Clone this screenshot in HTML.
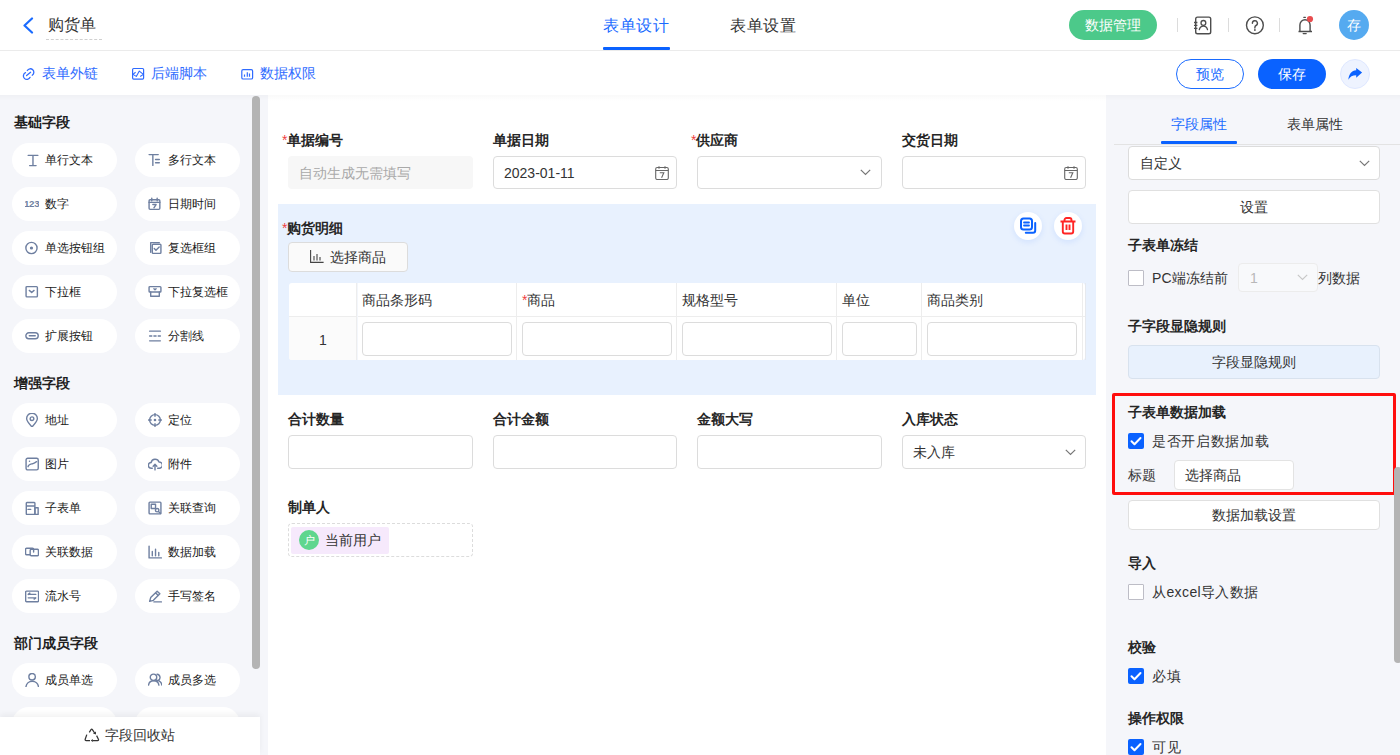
<!DOCTYPE html>
<html><head><meta charset="utf-8">
<style>
*{box-sizing:border-box;margin:0;padding:0}
html,body{width:1400px;height:755px;overflow:hidden;background:#fff;font-family:"Liberation Sans",sans-serif;color:#333}
.a{position:absolute;white-space:nowrap}
#hdr{position:absolute;left:0;top:0;width:1400px;height:51px;border-bottom:1px solid #ebebeb;background:#fff}
#sub{position:absolute;left:0;top:51px;width:1400px;height:44px;background:#fff}
#left{position:absolute;left:0;top:95px;width:268px;height:660px;background:#f5f6fa}
#canvas{position:absolute;left:268px;top:95px;width:838px;height:660px;background:#fff}
#right{position:absolute;left:1106px;top:95px;width:294px;height:660px;background:#f5f6fa}
.shadow{position:absolute;left:0;top:95px;width:1400px;height:6px;background:linear-gradient(rgba(0,0,0,0.025),rgba(0,0,0,0))}
.pill{position:absolute;width:105px;height:34px;border-radius:17px;background:#fff;font-size:12px;color:#1a1a1a;line-height:34px}
.pill svg{position:absolute;left:14px;top:11px;width:12px;height:12px}
.pill span{position:absolute;left:33px;top:0}
.h{position:absolute;font-size:14px;font-weight:bold;color:#1f1f1f;line-height:14px;margin-top:-1px}
.lbl{position:absolute;font-size:14px;font-weight:bold;color:#262626;line-height:14px;margin-top:-1px}
.req{color:#f03e3e;font-weight:normal}
.inp{position:absolute;border:1px solid #dcdcdc;border-radius:4px;background:#fff}
.btn{position:absolute;border:1px solid #e0e0e0;border-radius:4px;background:#fff;text-align:center;font-size:14px;color:#333}
.cb{position:absolute;width:16px;height:16px;border:1px solid #bdbdc6;border-radius:1px;background:#fff}
.cbc{position:absolute;width:16px;height:16px;border-radius:2px;background:#0a62ff}
.t14{font-size:14px;line-height:14px}
</style></head><body>

<!-- HEADER -->
<div id="hdr">
  <svg class="a" style="left:22px;top:17px" width="12" height="17" viewBox="0 0 12 17"><path d="M10 1.5 L2.5 8.5 L10 15.5" fill="none" stroke="#1a6bff" stroke-width="2.2" stroke-linecap="round" stroke-linejoin="round"/></svg>
  <div class="a" style="left:48px;top:16px;font-size:16px;line-height:18px;color:#333">购货单</div>
  <div class="a" style="left:46px;top:39px;width:56px;height:1px;border-top:1px dashed #d0d0d0"></div>
  <div class="a" style="left:603px;top:17px;font-size:16px;letter-spacing:0.6px;line-height:18px;color:#1a6bff">表单设计</div>
  <div class="a" style="left:603px;top:47px;width:67px;height:3px;background:#0a62ff;border-radius:1px"></div>
  <div class="a" style="left:730px;top:17px;font-size:16px;letter-spacing:0.6px;line-height:18px;color:#333">表单设置</div>
  <div class="a" style="left:1069px;top:10px;width:88px;height:30px;border-radius:15px;background:#4cc98a;color:#fff;font-size:14px;line-height:30px;text-align:center">数据管理</div>
  <div class="a" style="left:1177px;top:18px;width:1px;height:14px;background:#dcdcdc"></div>
  <div class="a" style="left:1228px;top:18px;width:1px;height:14px;background:#dcdcdc"></div>
  <div class="a" style="left:1279px;top:18px;width:1px;height:14px;background:#dcdcdc"></div>
  
  <svg class="a" style="left:1190px;top:12px" width="26" height="26" viewBox="0 0 26 26"><rect x="5.7" y="5.1" width="15" height="16.6" rx="1.8" fill="none" stroke="#4d4d4d" stroke-width="1.4"/><path d="M4 10.5h3.4M4 13.4h3.4M4 16.4h3.4" stroke="#4d4d4d" stroke-width="1.3"/><circle cx="13.4" cy="10.9" r="2.4" fill="none" stroke="#4d4d4d" stroke-width="1.3"/><path d="M9.3 17.7c0.5-2.3 2.1-3.6 4.1-3.6s3.6 1.3 4.1 3.6" fill="none" stroke="#4d4d4d" stroke-width="1.3" stroke-linecap="round"/></svg>
  <svg class="a" style="left:1242px;top:12px" width="26" height="26" viewBox="0 0 26 26"><circle cx="12.9" cy="13.3" r="8.4" fill="none" stroke="#4d4d4d" stroke-width="1.4"/><path d="M10.4 11.3a2.5 2.5 0 1 1 3.6 2.2c-0.8 0.4-1.1 0.9-1.1 1.7v0.8" fill="none" stroke="#4d4d4d" stroke-width="1.4" stroke-linecap="round"/><circle cx="12.9" cy="18" r="0.9" fill="#4d4d4d"/></svg>
  <svg class="a" style="left:1292px;top:12px" width="26" height="26" viewBox="0 0 26 26"><path d="M6.5 19.5h13.5M7.9 19.5v-6.6a5.1 5.1 0 0 1 10.2 0v6.6" fill="none" stroke="#4d4d4d" stroke-width="1.4"/><path d="M11.8 5.3h1.6M11.2 21.6h3" stroke="#4d4d4d" stroke-width="1.3" stroke-linecap="round"/><circle cx="18" cy="7" r="3.1" fill="#e84d4f"/></svg>
  <div class="a" style="left:1339px;top:10px;width:30px;height:30px;border-radius:15px;background:#55aaf0;color:#fff;font-size:14px;line-height:30px;text-align:center">存</div>
</div>

<!-- SUBHEADER -->
<div id="sub">
  <div class="a" style="left:42px;top:15px;font-size:14px;line-height:14px;color:#2f6bff">表单外链</div>
  <div class="a" style="left:151px;top:15px;font-size:14px;line-height:14px;color:#2f6bff">后端脚本</div>
  <div class="a" style="left:260px;top:15px;font-size:14px;line-height:14px;color:#2f6bff">数据权限</div>
  <div class="a" style="left:1176px;top:8px;width:68px;height:30px;border:1px solid #1a6bff;border-radius:15px;color:#1a6bff;font-size:14px;line-height:28px;text-align:center">预览</div>
  <div class="a" style="left:1258px;top:8px;width:68px;height:30px;border-radius:15px;background:#0a62ff;color:#fff;font-size:14px;line-height:30px;text-align:center">保存</div>
  <div class="a" style="left:1340px;top:8px;width:30px;height:30px;border-radius:15px;background:#eef3ff;border:1px solid #dfe8ff"></div>
</div>


  <svg class="a" style="left:18px;top:64px" width="20" height="20" viewBox="0 0 20 20"><path d="M9.3 6.5A3.5 3.5 0 1 1 14.2 11.2M7.5 8.7A3.5 3.5 0 1 0 12.1 13.3M8.6 11.6L12.6 8.3" fill="none" stroke="#2f6bff" stroke-width="1.3" stroke-linecap="round"/></svg>
  <svg class="a" style="left:128px;top:64px" width="20" height="20" viewBox="0 0 20 20"><rect x="4.6" y="4.5" width="11" height="10.6" rx="1" fill="none" stroke="#2f6bff" stroke-width="1.2"/><path d="M7.6 8.2L4.9 10.4l3.4 2L11.3 7.1l4.1 3.3-3.2 2.1" fill="none" stroke="#2f6bff" stroke-width="1.1" stroke-linejoin="round"/></svg>
  <svg class="a" style="left:237px;top:64px" width="20" height="20" viewBox="0 0 20 20"><rect x="4.8" y="5.6" width="10.8" height="9.4" rx="1.3" fill="none" stroke="#2f6bff" stroke-width="1.2"/><path d="M7.5 10.4v2.4M10.3 8.2v4.6M12.5 9.6v3.2" stroke="#2f6bff" stroke-width="1.2"/></svg>

<svg class="a" style="left:1340px;top:59px" width="30" height="30" viewBox="0 0 30 30"><path d="M16.2 9L22.1 13.6L16.2 18.7V16.2C12.5 16.2 10 17.5 8.4 20.7C8.8 15.5 11.5 11.6 16.2 11.3Z" fill="#0a62ff"/></svg>
<div id="left"></div>
<div class="h" style="left:14px;top:116px">基础字段</div>
<div class="pill" style="left:12px;top:143px"><svg viewBox="0 0 13 13" style="left:13px;top:9.6px;width:14px;height:14px"><path d="M2.9 2.2H12M7.4 2.2v9.5M4.3 11.7h6" stroke="#6e7fa0" stroke-width="1.3" fill="none" stroke-linecap="round" stroke-linejoin="round"/></svg><span>单行文本</span></div>
<div class="pill" style="left:135px;top:143px"><svg viewBox="0 0 13 13" style="left:13px;top:9.6px;width:14px;height:14px"><path d="M1 1.5h8.5M4.5 1.5v10M7 6h3.5M7 9h3.5" stroke="#6e7fa0" stroke-width="1.3" fill="none" stroke-linecap="round" stroke-linejoin="round"/></svg><span>多行文本</span></div>
<div class="pill" style="left:12px;top:187px"><svg viewBox="0 0 13 13" style="left:13px;top:9.6px;width:14px;height:14px"><text x="-1" y="9.6" font-family="Liberation Sans" font-weight="bold" font-size="9" letter-spacing="-0.2" fill="#6e7fa0">123</text></svg><span>数字</span></div>
<div class="pill" style="left:135px;top:187px"><svg viewBox="0 0 13 13" style="left:13px;top:9.6px;width:14px;height:14px"><rect x="1" y="2.5" width="10" height="9" rx="1" stroke="#6e7fa0" stroke-width="1.3" fill="none" stroke-linecap="round" stroke-linejoin="round"/><path d="M1 5h10M3.5 1v2.5M8.5 1v2.5M4.5 7h3l-2 3" stroke="#6e7fa0" stroke-width="1.3" fill="none" stroke-linecap="round" stroke-linejoin="round"/></svg><span>日期时间</span></div>
<div class="pill" style="left:12px;top:231px"><svg viewBox="0 0 13 13" style="left:13px;top:9.6px;width:14px;height:14px"><circle cx="6" cy="6.5" r="5.2" stroke="#6e7fa0" stroke-width="1.3" fill="none" stroke-linecap="round" stroke-linejoin="round"/><circle cx="6" cy="6.5" r="1.5" fill="#6e7fa0"/></svg><span>单选按钮组</span></div>
<div class="pill" style="left:135px;top:231px"><svg viewBox="0 0 13 13" style="left:13px;top:9.6px;width:14px;height:14px"><path d="M2.5 10.5v-9h8" stroke="#6e7fa0" stroke-width="1.3" fill="none" stroke-linecap="round" stroke-linejoin="round"/><rect x="4" y="3" width="8" height="8.5" rx="0.8" stroke="#6e7fa0" stroke-width="1.3" fill="none" stroke-linecap="round" stroke-linejoin="round"/><path d="M5.8 7l1.6 1.6 3-3" stroke="#6e7fa0" stroke-width="1.3" fill="none" stroke-linecap="round" stroke-linejoin="round"/></svg><span>复选框组</span></div>
<div class="pill" style="left:12px;top:275px"><svg viewBox="0 0 13 13" style="left:13px;top:9.6px;width:14px;height:14px"><rect x="1" y="1.5" width="10.5" height="9.5" rx="0.8" stroke="#6e7fa0" stroke-width="1.3" fill="none" stroke-linecap="round" stroke-linejoin="round"/><path d="M4 5l2.2 2 2.2-2" stroke="#6e7fa0" stroke-width="1.3" fill="none" stroke-linecap="round" stroke-linejoin="round"/></svg><span>下拉框</span></div>
<div class="pill" style="left:135px;top:275px"><svg viewBox="0 0 13 13" style="left:13px;top:9.6px;width:14px;height:14px"><rect x="1" y="1.5" width="11" height="5" rx="0.8" stroke="#6e7fa0" stroke-width="1.3" fill="none" stroke-linecap="round" stroke-linejoin="round"/><path d="M2.5 6.5v4h8v-4M5.5 3.5l1 1 1-1" stroke="#6e7fa0" stroke-width="1.3" fill="none" stroke-linecap="round" stroke-linejoin="round"/></svg><span>下拉复选框</span></div>
<div class="pill" style="left:12px;top:319px"><svg viewBox="0 0 13 13" style="left:13px;top:9.6px;width:14px;height:14px"><rect x="0.8" y="3.5" width="11.5" height="5.5" rx="2.75" stroke="#6e7fa0" stroke-width="1.3" fill="none" stroke-linecap="round" stroke-linejoin="round"/><path d="M4 6.25h5.5" stroke="#6e7fa0" stroke-width="1.3" fill="none" stroke-linecap="round" stroke-linejoin="round"/></svg><span>扩展按钮</span></div>
<div class="pill" style="left:135px;top:319px"><svg viewBox="0 0 13 13" style="left:13px;top:9.6px;width:14px;height:14px"><path d="M1.5 2h10M1.5 6.5h2M5.5 6.5h2M9.5 6.5h2M1.5 11h10" stroke="#6e7fa0" stroke-width="1.3" fill="none" stroke-linecap="round" stroke-linejoin="round"/></svg><span>分割线</span></div>
<div class="h" style="left:14px;top:377px">增强字段</div>
<div class="pill" style="left:12px;top:403px"><svg viewBox="0 0 13 13" style="left:13px;top:9.6px;width:14px;height:14px"><path d="M6.5 13C3.5 9.8 1.5 7.5 1.5 5.2a5 5 0 0 1 10 0C11.5 7.5 9.5 9.8 6.5 13z" stroke="#6e7fa0" stroke-width="1.3" fill="none" stroke-linecap="round" stroke-linejoin="round"/><circle cx="6.5" cy="5.3" r="1.7" stroke="#6e7fa0" stroke-width="1.3" fill="none" stroke-linecap="round" stroke-linejoin="round"/></svg><span>地址</span></div>
<div class="pill" style="left:135px;top:403px"><svg viewBox="0 0 13 13" style="left:13px;top:9.6px;width:14px;height:14px"><circle cx="6.5" cy="6.5" r="5" stroke="#6e7fa0" stroke-width="1.3" fill="none" stroke-linecap="round" stroke-linejoin="round"/><circle cx="6.5" cy="6.5" r="1.2" fill="#6e7fa0"/><path d="M6.5 0.5v2.5M6.5 10v2.5M0.5 6.5h2.5M10 6.5h2.5" stroke="#6e7fa0" stroke-width="1.3" fill="none" stroke-linecap="round" stroke-linejoin="round"/></svg><span>定位</span></div>
<div class="pill" style="left:12px;top:447px"><svg viewBox="0 0 13 13" style="left:13px;top:9.6px;width:14px;height:14px"><rect x="1" y="1.2" width="11.3" height="10.8" rx="1.5" stroke="#6e7fa0" stroke-width="1.3" fill="none" stroke-linecap="round" stroke-linejoin="round"/><path d="M2.8 9C3.5 6.2 5.8 6.6 7.4 6.1S9.6 5 10.8 4.4" stroke="#6e7fa0" stroke-width="1.3" fill="none" stroke-linecap="round" stroke-linejoin="round"/><circle cx="4.2" cy="4" r="0.7" fill="#6e7fa0"/></svg><span>图片</span></div>
<div class="pill" style="left:135px;top:447px"><svg viewBox="0 0 13 13" style="left:13px;top:9.6px;width:14px;height:14px"><path d="M4 10.5H3.2a2.7 2.7 0 0 1-.3-5.4 3.8 3.8 0 0 1 7.3-.5 2.9 2.9 0 0 1 .3 5.9H9M6.5 12V7M4.8 8.5l1.7-1.7 1.7 1.7" stroke="#6e7fa0" stroke-width="1.3" fill="none" stroke-linecap="round" stroke-linejoin="round"/></svg><span>附件</span></div>
<div class="pill" style="left:12px;top:491px"><svg viewBox="0 0 13 13" style="left:13px;top:9.6px;width:14px;height:14px"><path d="M9.2 12.5H1.8A.6.6 0 0 1 1.2 11.9V2A.6.6 0 0 1 1.8 1.4H8.6A.6.6 0 0 1 9.2 2V12.5M1.2 4.6H9.2M2.8 7.8h2.5" stroke="#6e7fa0" stroke-width="1.3" fill="none" stroke-linecap="round" stroke-linejoin="round"/><rect x="9.2" y="6.2" width="3" height="6.3" stroke="#6e7fa0" stroke-width="1.3" fill="none" stroke-linecap="round" stroke-linejoin="round"/></svg><span>子表单</span></div>
<div class="pill" style="left:135px;top:491px"><svg viewBox="0 0 13 13" style="left:13px;top:9.6px;width:14px;height:14px"><rect x="1" y="1" width="11" height="11" rx="0.8" stroke="#6e7fa0" stroke-width="1.3" fill="none" stroke-linecap="round" stroke-linejoin="round"/><rect x="3" y="3" width="4" height="4" stroke="#6e7fa0" stroke-width="1.3" fill="none" stroke-linecap="round" stroke-linejoin="round"/><circle cx="8.5" cy="8.5" r="1.6" stroke="#6e7fa0" stroke-width="1.3" fill="none" stroke-linecap="round" stroke-linejoin="round"/><path d="M9.7 9.7l2 2" stroke="#6e7fa0" stroke-width="1.3" fill="none" stroke-linecap="round" stroke-linejoin="round"/></svg><span>关联查询</span></div>
<div class="pill" style="left:12px;top:535px"><svg viewBox="0 0 13 13" style="left:13px;top:9.6px;width:14px;height:14px"><path d="M4.5 9H1.5A1 1 0 0 1 .5 8V4A1 1 0 0 1 1.5 3H7A1 1 0 0 1 8 4V6.5" stroke="#6e7fa0" stroke-width="1.3" fill="none" stroke-linecap="round" stroke-linejoin="round"/><rect x="4.8" y="4" width="7.7" height="6" rx="1" stroke="#6e7fa0" stroke-width="1.3" fill="none" stroke-linecap="round" stroke-linejoin="round"/></svg><span>关联数据</span></div>
<div class="pill" style="left:135px;top:535px"><svg viewBox="0 0 13 13" style="left:13px;top:9.6px;width:14px;height:14px"><path d="M1 1v11h11.5M4 6v4M7 4v6M10 7v3" stroke="#6e7fa0" stroke-width="1.3" fill="none" stroke-linecap="round" stroke-linejoin="round"/></svg><span>数据加载</span></div>
<div class="pill" style="left:12px;top:579px"><svg viewBox="0 0 13 13" style="left:13px;top:9.6px;width:14px;height:14px"><rect x="0.6" y="2" width="12" height="9.8" rx="0.8" stroke="#6e7fa0" stroke-width="1.3" fill="none" stroke-linecap="round" stroke-linejoin="round"/><path d="M3 5h7M3 5l1.5-1.2M3 8.2h7M10 8.2l-1.5 1.2" stroke="#6e7fa0" stroke-width="1.3" fill="none" stroke-linecap="round" stroke-linejoin="round"/></svg><span>流水号</span></div>
<div class="pill" style="left:135px;top:579px"><svg viewBox="0 0 13 13" style="left:13px;top:9.6px;width:14px;height:14px"><path d="M1.5 11.5l1-3.5 6-6 2.5 2.5-6 6zM7 3.5l2.5 2.5M5.5 12h7" stroke="#6e7fa0" stroke-width="1.3" fill="none" stroke-linecap="round" stroke-linejoin="round"/></svg><span>手写签名</span></div>
<div class="h" style="left:14px;top:637px">部门成员字段</div>
<div class="pill" style="left:12px;top:663px"><svg viewBox="0 0 13 13" style="left:13px;top:9.6px;width:14px;height:14px"><circle cx="6.6" cy="3.5" r="3" stroke="#6e7fa0" stroke-width="1.3" fill="none" stroke-linecap="round" stroke-linejoin="round"/><path d="M0.9 12.7A5.85 5.85 0 0 1 12.5 12.7" stroke="#6e7fa0" stroke-width="1.3" fill="none" stroke-linecap="round" stroke-linejoin="round"/></svg><span>成员单选</span></div>
<div class="pill" style="left:135px;top:663px"><svg viewBox="0 0 13 13" style="left:13px;top:9.6px;width:14px;height:14px"><circle cx="5.1" cy="4" r="3" stroke="#6e7fa0" stroke-width="1.3" fill="none" stroke-linecap="round" stroke-linejoin="round"/><path d="M8.4 1.2A3 3 0 0 1 9.2 7M0.5 11.2A4.85 4.6 0 0 1 10.1 11.2M7.8 6.8A4.9 4.5 0 0 1 12.8 11.2" stroke="#6e7fa0" stroke-width="1.3" fill="none" stroke-linecap="round" stroke-linejoin="round"/></svg><span>成员多选</span></div>
<div class="pill" style="left:12px;top:707px"></div><div class="pill" style="left:135px;top:707px"></div>
<div class="a" style="left:252px;top:96px;width:8px;height:573px;border-radius:4px;background:#b4b4b4"></div>
<div class="a" style="left:0;top:717px;width:260px;height:38px;background:#fff;box-shadow:0 -3px 6px rgba(0,0,0,0.05)"></div>
<svg class="a" style="left:80px;top:722px" width="30" height="26" viewBox="0 0 30 26"><path d="M9.3 10.3L11 7.6Q11.7 6.6 12.4 7.6L14.6 11M6.8 12.6L5.2 17.2Q4.8 18.5 6.2 18.5H10M16.6 13.6L18.4 17.2Q19 18.5 17.6 18.5H12.5" stroke="#333" stroke-width="1.25" fill="none"/><path d="M13 11.6L16 12.6L15.9 9.6Z M12.8 16.9L10.8 18.5L12.8 20.1Z" fill="#333"/></svg>
<div class="a" style="left:105px;top:727px;font-size:14px;line-height:16px;color:#333">字段回收站</div>

<div id="canvas"></div>
<div class="lbl" style="left:282px;top:134px"><span class="req">*</span>单据编号</div>
<div class="lbl" style="left:493px;top:134px">单据日期</div>
<div class="lbl" style="left:691px;top:134px"><span class="req">*</span>供应商</div>
<div class="lbl" style="left:902px;top:134px">交货日期</div>
<div class="a" style="left:288px;top:156px;width:185px;height:33px;border-radius:4px;background:#f7f7f7"></div>
<div class="a" style="left:299px;top:165px;font-size:14px;line-height:16px;color:#a9a9a9">自动生成无需填写</div>
<div class="inp" style="left:493px;top:156px;width:184px;height:33px"></div>
<div class="a" style="left:504px;top:165px;font-size:14px;line-height:16px;color:#333">2023-01-11</div>
<svg class="a" style="left:655px;top:166px" width="14" height="14" viewBox="0 0 14 14"><rect x="0.7" y="1.5" width="12.6" height="12" rx="1.5" fill="none" stroke="#666" stroke-width="1.1"/><path d="M0.7 4.5h12.6M4 0.3v2.5M10 0.3v2.5" stroke="#666" stroke-width="1.1" fill="none"/><path d="M4.8 6.8h4l-2.2 5" stroke="#666" stroke-width="1.1" fill="none"/></svg>
<div class="inp" style="left:697px;top:156px;width:185px;height:33px"></div>
<svg class="a" style="left:860px;top:169px" width="11" height="7" viewBox="0 0 11 7"><path d="M0.8 0.8l4.7 4.7 4.7-4.7" fill="none" stroke="#777" stroke-width="1.2"/></svg>
<div class="inp" style="left:902px;top:156px;width:184px;height:33px"></div>
<svg class="a" style="left:1064px;top:166px" width="14" height="14" viewBox="0 0 14 14"><rect x="0.7" y="1.5" width="12.6" height="12" rx="1.5" fill="none" stroke="#666" stroke-width="1.1"/><path d="M0.7 4.5h12.6M4 0.3v2.5M10 0.3v2.5" stroke="#666" stroke-width="1.1" fill="none"/><path d="M4.8 6.8h4l-2.2 5" stroke="#666" stroke-width="1.1" fill="none"/></svg>
<div class="a" style="left:278px;top:204px;width:818px;height:191px;background:#e8f1fe"></div>
<div class="lbl" style="left:282px;top:222px"><span class="req">*</span>购货明细</div>
<div class="a" style="left:288px;top:242px;width:120px;height:30px;border:1px solid #dcdcdc;border-radius:4px;background:#fafafa"></div>
<svg class="a" style="left:310px;top:250px" width="14" height="13" viewBox="0 0 14 13"><path d="M0.6 0v12.4h13M4 6v4.5M7 4v6.5M10 7v3.5" fill="none" stroke="#444" stroke-width="1.1"/></svg>
<div class="a" style="left:330px;top:249px;font-size:14px;line-height:16px;color:#333">选择商品</div>
<div class="a" style="left:1014px;top:212px;width:28px;height:28px;border-radius:14px;background:#fff;box-shadow:0 2px 6px rgba(10,98,255,0.10)"></div>
<svg class="a" style="left:1019px;top:217px" width="19" height="18" viewBox="0 0 19 18"><rect x="2" y="1.5" width="11" height="11" rx="2.5" fill="none" stroke="#0a62ff" stroke-width="2"/><path d="M5 5.5h5M5 8.5h5" stroke="#0a62ff" stroke-width="1.8" stroke-linecap="round"/><path d="M16.2 6v7.5a2.2 2.2 0 0 1-2.2 2.2H6.8" fill="none" stroke="#0a62ff" stroke-width="2" stroke-linecap="round"/></svg>
<div class="a" style="left:1054px;top:212px;width:28px;height:28px;border-radius:14px;background:#fff;box-shadow:0 2px 6px rgba(10,98,255,0.10)"></div>
<svg class="a" style="left:1059px;top:217px" width="18" height="18" viewBox="0 0 18 18"><path d="M1.5 4.5h15M5.5 4.5V3a2 2 0 0 1 2-2h3a2 2 0 0 1 2 2v1.5M3.8 5v9.5a2 2 0 0 0 2 2h6.4a2 2 0 0 0 2-2V5M7.5 7.5v5.5M10.5 7.5v5.5" fill="none" stroke="#ff2424" stroke-width="1.9"/></svg>
<div class="a" style="left:289px;top:283px;width:796px;height:77px;background:#fff;border-radius:3px"></div>
<div class="a" style="left:289px;top:316px;width:67px;height:44px;background:#fbfbfb;border-radius:0 0 0 3px"></div>
<div class="a" style="left:289px;top:316px;width:796px;height:1px;background:#ededed"></div>
<div class="a" style="left:356px;top:283px;width:1px;height:77px;background:#ededed"></div>
<div class="a" style="left:516px;top:283px;width:1px;height:77px;background:#ededed"></div>
<div class="a" style="left:676px;top:283px;width:1px;height:77px;background:#ededed"></div>
<div class="a" style="left:836px;top:283px;width:1px;height:77px;background:#ededed"></div>
<div class="a" style="left:921px;top:283px;width:1px;height:77px;background:#ededed"></div>
<div class="a" style="left:1082px;top:283px;width:1px;height:77px;background:#ededed"></div>
<div class="a" style="left:357px;top:283px;width:1px;height:77px;background:#f3f6fb"></div>
<div class="a" style="left:1085px;top:283px;width:1px;height:77px;background:#e6e9ee"></div>
<div class="a" style="left:319px;top:332px;font-size:14px;line-height:16px;color:#333">1</div>
<div class="a" style="left:362px;top:292px;font-size:14px;line-height:16px;color:#333">商品条形码</div>
<div class="a" style="left:522px;top:292px;font-size:14px;line-height:16px;color:#333"><span class="req">*</span>商品</div>
<div class="a" style="left:682px;top:292px;font-size:14px;line-height:16px;color:#333">规格型号</div>
<div class="a" style="left:842px;top:292px;font-size:14px;line-height:16px;color:#333">单位</div>
<div class="a" style="left:927px;top:292px;font-size:14px;line-height:16px;color:#333">商品类别</div>
<div class="inp" style="left:362px;top:322px;width:150px;height:34px"></div>
<div class="inp" style="left:522px;top:322px;width:150px;height:34px"></div>
<div class="inp" style="left:682px;top:322px;width:150px;height:34px"></div>
<div class="inp" style="left:842px;top:322px;width:75px;height:34px"></div>
<div class="inp" style="left:927px;top:322px;width:150px;height:34px"></div>
<div class="lbl" style="left:288px;top:413px">合计数量</div>
<div class="lbl" style="left:493px;top:413px">合计金额</div>
<div class="lbl" style="left:697px;top:413px">金额大写</div>
<div class="lbl" style="left:902px;top:413px">入库状态</div>
<div class="inp" style="left:288px;top:435px;width:185px;height:34px"></div>
<div class="inp" style="left:493px;top:435px;width:184px;height:34px"></div>
<div class="inp" style="left:697px;top:435px;width:185px;height:34px"></div>
<div class="inp" style="left:902px;top:435px;width:184px;height:34px"></div>
<div class="a" style="left:913px;top:444px;font-size:14px;line-height:16px;color:#333">未入库</div>
<svg class="a" style="left:1065px;top:449px" width="11" height="7" viewBox="0 0 11 7"><path d="M0.8 0.8l4.7 4.7 4.7-4.7" fill="none" stroke="#777" stroke-width="1.2"/></svg>
<div class="lbl" style="left:288px;top:501px">制单人</div>
<div class="a" style="left:288px;top:523px;width:185px;height:34px;border:1px dashed #dcdcdc;border-radius:4px"></div>
<div class="a" style="left:291px;top:527px;width:98px;height:27px;background:#f6e9fc;border-radius:2px"></div>
<div class="a" style="left:299px;top:530px;width:20px;height:20px;border-radius:10px;background:#5fd68e;color:#fff;font-size:11px;line-height:20px;text-align:center">户</div>
<div class="a" style="left:325px;top:532px;font-size:14px;line-height:16px;color:#333">当前用户</div>
<div id="right"></div>
<div class="a" style="left:1171px;top:116px;font-size:14px;line-height:16px;color:#1a6bff">字段属性</div>
<div class="a" style="left:1287px;top:116px;font-size:14px;line-height:16px;color:#333">表单属性</div>
<div class="a" style="left:1114px;top:144px;width:286px;height:1px;background:#e3e3e3"></div>
<div class="a" style="left:1161px;top:141px;width:76px;height:3px;background:#0a62ff;border-radius:1px"></div>
<div class="inp" style="left:1128px;top:146px;width:252px;height:34px"></div>
<div class="a" style="left:1140px;top:155px;font-size:14px;line-height:16px;color:#333">自定义</div>
<svg class="a" style="left:1359px;top:160px" width="11" height="7" viewBox="0 0 11 7"><path d="M0.8 0.8l4.7 4.7 4.7-4.7" fill="none" stroke="#777" stroke-width="1.2"/></svg>
<div class="btn" style="left:1128px;top:190px;width:252px;height:34px;line-height:32px">设置</div>
<div class="lbl" style="left:1128px;top:239px">子表单冻结</div>
<div class="cb" style="left:1128px;top:270px"></div>
<div class="a" style="left:1152px;top:270px;font-size:14px;line-height:16px;color:#333;letter-spacing:0.1px">PC端冻结前</div>
<div class="a" style="left:1238px;top:263px;width:80px;height:29px;border:1px solid #ececec;border-radius:4px;background:#f8f9fb"></div>
<div class="a" style="left:1250px;top:270px;font-size:14px;line-height:16px;color:#b8b8b8">1</div>
<svg class="a" style="left:1297px;top:274px" width="11" height="7" viewBox="0 0 11 7"><path d="M0.8 0.8l4.7 4.7 4.7-4.7" fill="none" stroke="#c8c8c8" stroke-width="1.2"/></svg>
<div class="a" style="left:1318px;top:270px;font-size:14px;line-height:16px;color:#333">列数据</div>
<div class="lbl" style="left:1128px;top:320px">子字段显隐规则</div>
<div class="btn" style="left:1128px;top:345px;width:252px;height:34px;line-height:32px;background:#e8f1fd;border-color:#d8e2ee">字段显隐规则</div>
<div class="a" style="left:1112px;top:393px;width:284px;height:102px;border:3px solid #ff0d0d;border-radius:2px"></div>
<div class="lbl" style="left:1128px;top:406px">子表单数据加载</div>
<svg class="a" style="left:1128px;top:433px" width="16" height="16" viewBox="0 0 16 16"><rect width="16" height="16" rx="2" fill="#0a62ff"/><path d="M3.5 8.2l3 3 6-6.2" fill="none" stroke="#fff" stroke-width="2" stroke-linecap="round" stroke-linejoin="round"/></svg>
<div class="a" style="left:1152px;top:433px;font-size:14px;line-height:16px;color:#333;letter-spacing:0.7px">是否开启数据加载</div>
<div class="a" style="left:1128px;top:467px;font-size:14px;line-height:16px;color:#333">标题</div>
<div class="inp" style="left:1174px;top:460px;width:120px;height:30px;border-color:#e3e3e3"></div>
<div class="a" style="left:1185px;top:467px;font-size:14px;line-height:16px;color:#333">选择商品</div>
<div class="btn" style="left:1128px;top:500px;width:252px;height:30px;line-height:28px">数据加载设置</div>
<div class="lbl" style="left:1128px;top:557px">导入</div>
<div class="cb" style="left:1128px;top:584px"></div>
<div class="a" style="left:1152px;top:584px;font-size:14px;line-height:16px;color:#333;letter-spacing:0.4px">从excel导入数据</div>
<div class="lbl" style="left:1128px;top:641px">校验</div>
<svg class="a" style="left:1128px;top:668px" width="16" height="16" viewBox="0 0 16 16"><rect width="16" height="16" rx="2" fill="#0a62ff"/><path d="M3.5 8.2l3 3 6-6.2" fill="none" stroke="#fff" stroke-width="2" stroke-linecap="round" stroke-linejoin="round"/></svg>
<div class="a" style="left:1152px;top:668px;font-size:14px;line-height:16px;color:#333;letter-spacing:0.7px">必填</div>
<div class="lbl" style="left:1128px;top:712px">操作权限</div>
<svg class="a" style="left:1128px;top:739px" width="16" height="16" viewBox="0 0 16 16"><rect width="16" height="16" rx="2" fill="#0a62ff"/><path d="M3.5 8.2l3 3 6-6.2" fill="none" stroke="#fff" stroke-width="2" stroke-linecap="round" stroke-linejoin="round"/></svg>
<div class="a" style="left:1152px;top:739px;font-size:14px;line-height:16px;color:#333;letter-spacing:0.7px">可见</div>
<div class="a" style="left:1394px;top:467px;width:8px;height:196px;border-radius:4px;background:#b4b4b4"></div>
<div class="shadow"></div>

</body></html>
